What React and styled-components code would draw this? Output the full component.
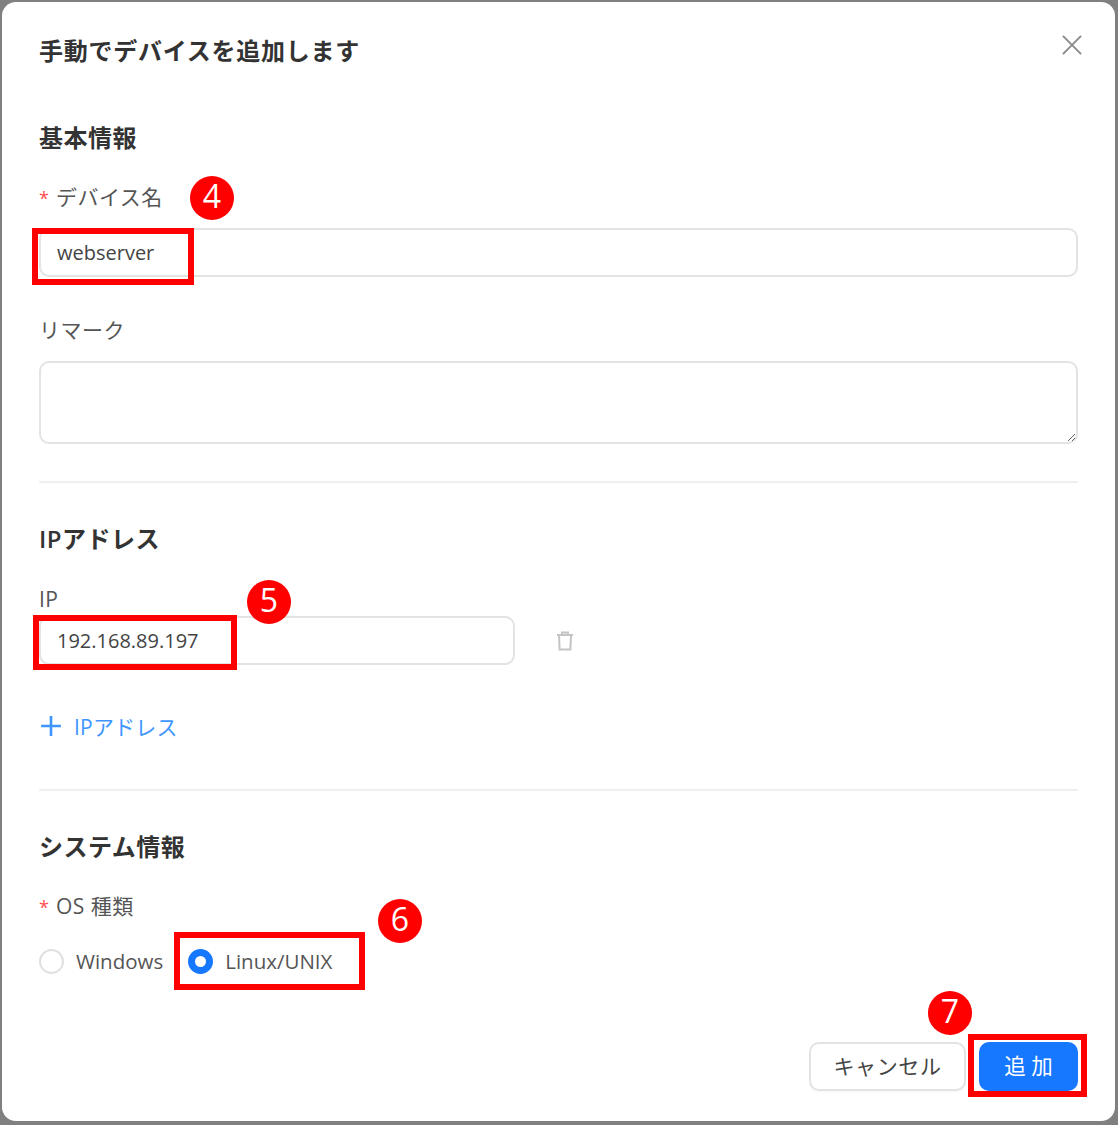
import React from 'react';
import styled, { createGlobalStyle } from 'styled-components';

const FONT = `"Open Sans", "Noto Sans CJK JP", "Noto Sans", sans-serif`;

const GlobalStyle = createGlobalStyle`
    html, body {
        margin: 0;
        padding: 0;
        background: #808080;
        font-family: ${FONT};
    }
`;

const marks = [
    { n: 4, box: [32, 228, 162, 57], badge: [190, 176] },
    { n: 5, box: [33, 615, 204, 55], badge: [247, 580] },
    { n: 6, box: [174, 932, 191, 58], badge: [378, 899] },
    { n: 7, box: [968, 1034, 119, 63], badge: [928, 991] },
];

export default function App() {
    return (
        <>
            <GlobalStyle />
            <Dialog>
                <Header>
                    <Title>手動でデバイスを追加します</Title>
                    <CloseIcon viewBox="0 0 22 22">
                        <path d="M1 1 L21 21 M21 1 L1 21" />
                    </CloseIcon>
                </Header>

                <SectionTitle $top={53}>基本情報</SectionTitle>
                <Label $top={27} $bottom={16}><Star>*</Star>デバイス名</Label>
                <Input defaultValue="webserver" readOnly />
                <Label $top={38} $bottom={16}>リマーク</Label>
                <TextArea />
                <Divider $top={37} />

                <SectionTitle $top={39}>IPアドレス</SectionTitle>
                <Label $top={28} $bottom={2}>IP</Label>
                <IpRow>
                    <Input defaultValue="192.168.89.197" readOnly />
                    <TrashIcon viewBox="0 0 18 20">
                        <path d="M1 4 H17 M6 4 V1.5 H12 V4 M3 4 L3.6 18.5 H14.4 L15 4" />
                    </TrashIcon>
                </IpRow>
                <AddLink>
                    <PlusIcon viewBox="0 0 20 20">
                        <path d="M10 1 V19 M1 10 H19" />
                    </PlusIcon>
                    IPアドレス
                </AddLink>
                <Divider $top={47} />

                <SectionTitle $top={39}>システム情報</SectionTitle>
                <Label $top={27}><Star>*</Star>OS 種類</Label>
                <RadioRow>
                    <RadioItem>
                        <RadioDot />
                        Windows
                    </RadioItem>
                    <RadioItem>
                        <RadioDot $checked />
                        Linux/UNIX
                    </RadioItem>
                </RadioRow>

                <Footer>
                    <CancelButton>キャンセル</CancelButton>
                    <PrimaryButton>追 加</PrimaryButton>
                </Footer>
            </Dialog>

            {marks.map((m) => (
                <React.Fragment key={m.n}>
                    <RedBox $x={m.box[0]} $y={m.box[1]} $w={m.box[2]} $h={m.box[3]} />
                    <Badge $x={m.badge[0]} $y={m.badge[1]}>{m.n}</Badge>
                </React.Fragment>
            ))}
        </>
    );
}

const Dialog = styled.div`
    box-sizing: border-box;
    width: 1113px;
    height: 1119px;
    margin: 2px 0 0 2px;
    padding: 0 37px;
    background: #fff;
    border-radius: 14px;
    display: flex;
    flex-direction: column;
`;

const Header = styled.div`
    display: flex;
    justify-content: space-between;
    align-items: center;
    height: 34px;
    margin-top: 32px;
`;

const Title = styled.h1`
    margin: 0;
    font-size: 24px;
    font-weight: 600;
    letter-spacing: 0.75px;
    color: #333;
    line-height: 34px;
`;

const CloseIcon = styled.svg`
    width: 20px;
    height: 20px;
    margin: -12px -4px 0 0;
    fill: none;
    stroke: #8c8c8c;
    stroke-width: 2.2;
`;

const SectionTitle = styled.h2`
    margin: ${(p) => p.$top}px 0 0;
    font-size: 24px;
    font-weight: 600;
    letter-spacing: 0.5px;
    color: #333;
    line-height: 34px;
`;

const Label = styled.div`
    margin: ${(p) => p.$top}px 0 ${(p) => p.$bottom || 0}px;
    height: 30px;
    line-height: 30px;
    font-size: 21px;
    letter-spacing: 0.5px;
    color: #555;
`;

const Star = styled.span`
    display: inline-block;
    width: 17px;
    color: #ff4d4f;
    font-size: 18px;
`;

const Input = styled.input`
    box-sizing: border-box;
    display: block;
    width: 100%;
    height: 49px;
    padding: 0 16px;
    border: 2px solid #e3e3e3;
    border-radius: 10px;
    outline: none;
    background: #fff;
    font-family: ${FONT};
    font-size: 20px;
    color: #444;
`;

const TextArea = styled.textarea`
    box-sizing: border-box;
    display: block;
    width: 100%;
    height: 83px;
    margin: 0;
    padding: 8px 17px;
    border: 2px solid #e3e3e3;
    border-radius: 10px;
    outline: none;
    font-family: ${FONT};
`;

const Divider = styled.hr`
    width: 100%;
    margin: ${(p) => p.$top}px 0 0;
    border: 0;
    border-top: 2px solid #f0f0f0;
`;

const IpRow = styled.div`
    display: flex;
    align-items: center;
    width: 540px;

    ${Input} {
        width: 476px;
        flex: none;
    }
`;

const TrashIcon = styled.svg`
    width: 18px;
    height: 20px;
    margin-left: 41px;
    fill: none;
    stroke: #c4c4c4;
    stroke-width: 2;
`;

const AddLink = styled.div`
    display: flex;
    align-items: center;
    gap: 12px;
    margin-top: 45px;
    height: 32px;
    font-size: 21px;
    letter-spacing: 0.2px;
    color: #4096ff;
`;

const PlusIcon = styled.svg`
    width: 22px;
    height: 22px;
    margin-left: 1px;
    fill: none;
    stroke: #4096ff;
    stroke-width: 2.4;
`;

const RadioRow = styled.div`
    display: flex;
    gap: 25px;
    margin-top: 25px;
    height: 30px;
`;

const RadioItem = styled.label`
    display: flex;
    align-items: center;
    gap: 12px;
    font-size: 20.5px;
    color: #555;
`;

const RadioDot = styled.span`
    box-sizing: border-box;
    width: 25px;
    height: 25px;
    border-radius: 50%;
    background: #fff;
    border: ${(p) => (p.$checked ? '7.5px solid #1677ff' : '2px solid #e0e0e0')};
`;

const Footer = styled.div`
    display: flex;
    justify-content: flex-end;
    gap: 13px;
    margin-top: 66px;
`;

const CancelButton = styled.button`
    box-sizing: border-box;
    width: 157px;
    height: 49px;
    padding: 0 0 4px;
    border: 2px solid #e3e3e3;
    border-radius: 10px;
    background: #fff;
    font-family: ${FONT};
    font-size: 21px;
    letter-spacing: 0.6px;
    color: #444;
    box-shadow: 0 2px 0 rgba(0, 0, 0, 0.02);
`;

const PrimaryButton = styled.button`
    box-sizing: border-box;
    width: 99px;
    height: 49px;
    padding: 0 0 4px;
    border: 0;
    border-radius: 10px;
    background: #1677ff;
    font-family: ${FONT};
    font-size: 21.5px;
    color: #fff;
`;

const RedBox = styled.div`
    position: absolute;
    box-sizing: border-box;
    left: ${(p) => p.$x}px;
    top: ${(p) => p.$y}px;
    width: ${(p) => p.$w}px;
    height: ${(p) => p.$h}px;
    border: 6px solid #ff0000;
`;

const Badge = styled.div`
    position: absolute;
    left: ${(p) => p.$x}px;
    top: ${(p) => p.$y}px;
    width: 44px;
    height: 44px;
    border-radius: 50%;
    background: #ff0000;
    color: #fff;
    font-size: 32px;
    line-height: 39px;
    text-align: center;
`;
